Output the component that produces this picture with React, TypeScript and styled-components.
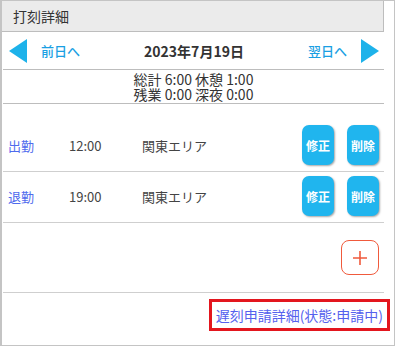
import styled, { createGlobalStyle } from 'styled-components';

const GlobalStyle = createGlobalStyle`
  html, body {
    margin: 0;
    padding: 0;
    background: #fff;
  }
  body {
    font-family: "Noto Sans CJK JP", "Noto Sans", sans-serif;
    color: #333;
  }
`;

const Frame = styled.div`
  width: 395px;
  height: 346px;
  box-sizing: border-box;
  border: 1px solid #c4c4c4;
  border-left-width: 2px;
  padding-right: 10px;
  background: #fff;
`;

const Header = styled.div`
  height: 30px;
  display: flex;
  align-items: center;
  padding-left: 11px;
  background: #ebebeb;
  border-right: 1px solid #bdbdbd;
  border-bottom: 1px solid #bdbdbd;
  font-size: 14px;
  color: #333;
`;

const Body = styled.div`
  padding-left: 1px;
`;

const NavRow = styled.div`
  height: 37px;
  display: grid;
  grid-template-columns: 1fr auto 1fr;
  align-items: center;
  border-bottom: 1px solid #bdbdbd;
  padding: 0 5px 0 6px;
`;

const NavSide = styled.div<{ $right?: boolean }>`
  display: flex;
  align-items: center;
  justify-content: ${({ $right }) => ($right ? 'flex-end' : 'flex-start')};
  gap: 14px;
`;

const NavLink = styled.span`
  font-size: 13px;
  color: #1a9fe3;
  font-weight: 500;
`;

const DateLabel = styled.span`
  font-size: 14px;
  font-weight: 700;
  color: #333;
`;

const Summary = styled.div`
  height: 33px;
  display: flex;
  align-items: center;
  justify-content: center;
  text-align: center;
  white-space: pre-line;
  font-size: 14px;
  line-height: 15px;
  color: #333;
  border-bottom: 1px solid #bdbdbd;
`;

const List = styled.div`
  padding-top: 17px;
`;

const Row = styled.div`
  height: 48px;
  display: flex;
  align-items: center;
  border-bottom: 1px solid #cfcfcf;
  padding: 0 5px 2px 5px;
  font-size: 13px;
`;

const Kind = styled.span`
  width: 61px;
  color: #4f6bed;
`;

const Time = styled.span`
  width: 73px;
  color: #444;
`;

const Area = styled.span`
  flex: 1;
  color: #444;
`;

const Actions = styled.div`
  display: flex;
  gap: 13px;
`;

const ActionButton = styled.button`
  width: 32px;
  height: 40px;
  padding: 0;
  border: none;
  border-radius: 7px;
  background: #20b5ee;
  color: #fff;
  font-family: inherit;
  font-size: 12px;
  font-weight: 700;
  box-shadow: 1px 1px 2px rgba(0, 0, 0, 0.35);
`;

const AddRow = styled.div`
  height: 69px;
  display: flex;
  align-items: center;
  justify-content: flex-end;
  padding-right: 5px;
  border-bottom: 1px solid #cfcfcf;
`;

const AddButton = styled.div`
  width: 38px;
  height: 35px;
  box-sizing: border-box;
  border: 1px solid #f05a3c;
  border-radius: 8px;
  display: flex;
  align-items: center;
  justify-content: center;
`;

const LinkRow = styled.div`
  display: flex;
  justify-content: flex-end;
  padding: 13px 1px 0 0;
`;

const DetailLink = styled.span`
  font-size: 14px;
  line-height: 18px;
  color: #5561ee;
  outline: 3px solid #e3161e;
  outline-offset: 4px;
`;

function Triangle({ dir }: { dir: 'left' | 'right' }) {
  const points = dir === 'left' ? '18,0 18,24 0,12' : '0,0 0,24 18,12';
  return (
    <svg width="18" height="24" viewBox="0 0 18 24">
      <polygon points={points} fill="#1db2ea" />
    </svg>
  );
}

const entries = [
  { kind: '出勤', time: '12:00', area: '関東エリア' },
  { kind: '退勤', time: '19:00', area: '関東エリア' },
];

const summaryText = '総計 6:00 休憩 1:00\n残業 0:00 深夜 0:00';

export default function App() {
  return (
    <>
      <GlobalStyle />
      <Frame>
        <Header>打刻詳細</Header>
        <Body>
          <NavRow>
            <NavSide>
              <Triangle dir="left" />
              <NavLink>前日へ</NavLink>
            </NavSide>
            <DateLabel>2023年7月19日</DateLabel>
            <NavSide $right>
              <NavLink>翌日へ</NavLink>
              <Triangle dir="right" />
            </NavSide>
          </NavRow>
          <Summary>{summaryText}</Summary>
          <List>
            {entries.map((e) => (
              <Row key={e.kind}>
                <Kind>{e.kind}</Kind>
                <Time>{e.time}</Time>
                <Area>{e.area}</Area>
                <Actions>
                  <ActionButton>修正</ActionButton>
                  <ActionButton>削除</ActionButton>
                </Actions>
              </Row>
            ))}
          </List>
          <AddRow>
            <AddButton>
              <svg width="16" height="16" viewBox="0 0 16 16">
                <path d="M8 1v14M1 8h14" stroke="#f05a3c" strokeWidth="1.6" />
              </svg>
            </AddButton>
          </AddRow>
          <LinkRow>
            <DetailLink>遅刻申請詳細(状態:申請中)</DetailLink>
          </LinkRow>
        </Body>
      </Frame>
    </>
  );
}
